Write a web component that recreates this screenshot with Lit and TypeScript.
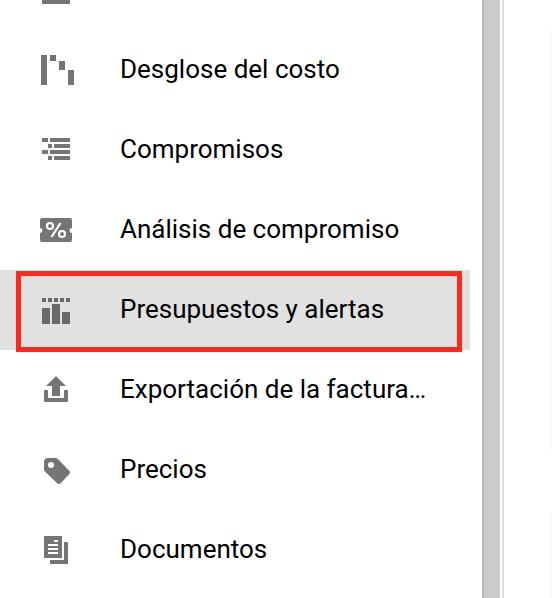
import { LitElement, html, css, svg } from "lit";
import { customElement } from "lit/decorators.js";
import { classMap } from "lit/directives/class-map.js";

const icons = {
  overview: svg`<path d="M6 30h28v4H6z"/>`,
  breakdown: svg`<path d="M5 5h6v30H5zM14 5h6v6h-6zM23 11h6v9h-6zM32 20h6v15h-6z"/>`,
  commitments: svg`<path d="M6 8h6v4H6zM14 8h20v4H14zM12 14h4v4h-4zM18 14h16v4H18zM6 20h6v4H6zM14 20h20v4H14zM12 26h4v4h-4zM18 26h16v4H18z"/>`,
  analysis: svg`<path d="M6 8h28a2 2 0 0 1 2 2v8a2 2 0 0 0 0 5v7a2 2 0 0 1-2 2H6a2 2 0 0 1-2-2v-7a2 2 0 0 0 0-5v-8a2 2 0 0 1 2-2z"/>
    <g fill="none" stroke="#fff" stroke-width="2.200"><circle cx="14" cy="16" r="3"/><circle cx="26" cy="24" r="3"/><path d="M24.500 13L15.500 27"/></g>`,
  budgets: svg`<path d="M6 8h4v4H6zM12 8h4v4h-4zM18 8h4v4h-4zM24 8h4v4h-4zM30 8h4v4h-4zM6 18h8v16H6zM16 14h8v20h-8zM26 22h8v12h-8z"/>`,
  exporting: svg`<path d="M20 6l10 10h-6v10h-8V16h-6zM8 20h4v8h16v-8h4v12H8z"/>`,
  prices: svg`<path fill-rule="evenodd" d="M12 8h7q2 0 3.400 1.400L33 20.500q2 2 0 4L25 33q-2 2-4 0L9.400 22Q8 20.700 8 19v-7q0-4 4-4zM15 12a3 3 0 1 0 0 6a3 3 0 1 0 0-6z"/>`,
  documents: svg`<path fill-rule="evenodd" d="M8 6h18v22H8zM18 10v2h4v-2zM12 14v2h10v-2zM12 18v2h10v-2zM12 22v2h10v-2zM28 12h4v22H14v-4h14z"/>`,
};

const items = [
  { label: "Desglose del costo", icon: icons.breakdown },
  { label: "Compromisos", icon: icons.commitments },
  { label: "Análisis de compromiso", icon: icons.analysis },
  { label: "Presupuestos y alertas", icon: icons.budgets, selected: true },
  { label: "Exportación de la factura…", icon: icons.exporting },
  { label: "Precios", icon: icons.prices },
  { label: "Documentos", icon: icons.documents },
];

@customElement("app-root")
export class AppRoot extends LitElement {
  static styles = css`
    :host {
      display: flex;
      height: 100vh;
      overflow: hidden;
      background: #fff;
      color: #000;
      font-family: Roboto, "Liberation Sans", sans-serif;
    }
    .nav {
      flex: 1;
      min-width: 0;
      margin-right: 12px;
    }
    .list {
      list-style: none;
      margin: 0;
      padding: 0;
    }
    .previous {
      display: flex;
      align-items: flex-end;
      height: 30px;
      padding: 0 36px 20px;
      box-sizing: border-box;
    }
    .item {
      position: relative;
    }
    .link {
      display: flex;
      align-items: center;
      gap: 44px;
      height: 80px;
      padding: 0 36px;
      box-sizing: border-box;
      color: inherit;
      text-decoration: none;
      font-size: 26px;
      line-height: 32px;
      white-space: nowrap;
    }
    .label {
      padding-bottom: 2px;
    }
    .icon {
      flex: none;
      width: 40px;
      height: 40px;
      fill: #757575;
    }
    .selected {
      background: #e1e1e1;
    }
    .selected .icon {
      fill: #696969;
    }
    .selected::after {
      content: "";
      position: absolute;
      inset: 1px 8px -2px 16px;
      border: 5px solid #ff2a1c;
      pointer-events: none;
    }
    .scrollbar {
      flex: none;
      width: 16px;
      border-left: 2px solid #b8b8b8;
      background: #cbcbcb;
    }
    .content {
      flex: none;
      display: flex;
      flex-direction: column;
      align-items: flex-end;
      gap: 60px;
      width: 50px;
      margin-left: 2px;
      padding-top: 26px;
      box-sizing: border-box;
      border-left: 2px solid #e0e0e0;
    }
    .card {
      flex: none;
      width: 2px;
      height: 426px;
      background: #fbfbfb;
    }
  `;

  render() {
    return html`
      <nav class="nav" aria-label="Facturación">
        <ul class="list">
          <li class="previous">
            <svg class="icon" viewBox="0 0 40 40" aria-hidden="true">${icons.overview}</svg>
          </li>
          ${items.map(
            (item) => html`
              <li class=${classMap({ item: true, selected: !!item.selected })}>
                <a class="link" href="#" aria-current=${item.selected ? "page" : "false"}>
                  <svg class="icon" viewBox="0 0 40 40" aria-hidden="true">${item.icon}</svg>
                  <span class="label">${item.label}</span>
                </a>
              </li>
            `,
          )}
        </ul>
      </nav>
      <div class="scrollbar"></div>
      <main class="content">
        <div class="card"></div>
        <div class="card"></div>
      </main>
    `;
  }
}
